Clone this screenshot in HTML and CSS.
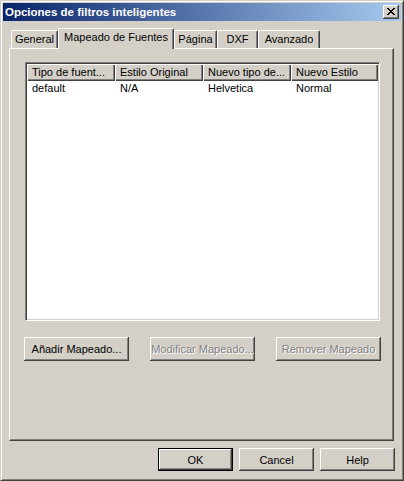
FILE: index.html
```html
<!DOCTYPE html>
<html lang="es">
<head>
<meta charset="utf-8">
<title>Opciones de filtros inteligentes</title>
<link rel="stylesheet" href="styles.css">
</head>
<body>
<div class="window">
  <div class="titlebar">
    <span class="title">Opciones de filtros inteligentes</span>
    <button class="close" aria-label="Cerrar">
      <svg width="8" height="7" viewBox="0 0 8 7" shape-rendering="crispEdges"><path d="M0 0h2v1H0zM6 0h2v1H6zM1 1h2v1H1zM5 1h2v1H5zM2 2h4v1H2zM3 3h2v1H3zM2 4h4v1H2zM1 5h2v1H1zM5 5h2v1H5zM0 6h2v1H0zM6 6h2v1H6z" fill="#000"/></svg>
    </button>
  </div>
  <div class="body">
    <div class="tabstrip">
      <div class="tab t-general">General</div>
      <div class="tab active t-mapeado">Mapeado de Fuentes</div>
      <div class="tab t-pagina">Página</div>
      <div class="tab t-dxf">DXF</div>
      <div class="tab t-avanzado">Avanzado</div>
    </div>
    <div class="panel">
      <div class="list">
        <div class="row header">
          <div class="cell c1">Tipo de fuent...</div>
          <div class="cell c2">Estilo Original</div>
          <div class="cell c3">Nuevo tipo de...</div>
          <div class="cell c4">Nuevo Estilo</div>
        </div>
        <div class="row data">
          <div class="cell c1">default</div>
          <div class="cell c2">N/A</div>
          <div class="cell c3">Helvetica</div>
          <div class="cell c4">Normal</div>
        </div>
      </div>
      <div class="actions">
        <button class="btn wide">Añadir Mapeado...</button>
        <button class="btn wide disabled">Modificar Mapeado...</button>
        <button class="btn wide disabled">Remover Mapeado</button>
      </div>
    </div>
  </div>
  <div class="footer">
    <button class="btn std default">OK</button>
    <button class="btn std">Cancel</button>
    <button class="btn std">Help</button>
  </div>
</div>
</body>
</html>
```
FILE: styles.css
```css
html, body {
  margin: 0;
  padding: 0;
  background: #d4d0c8;
}
body {
  font-family: "Liberation Sans", Arial, sans-serif;
  font-size: 11px;
  color: #000;
}
.window {
  width: 404px;
  height: 481px;
  box-sizing: border-box;
  background: #d4d0c8;
  border: 1px solid;
  border-color: #d4d0c8 #404040 #404040 #d4d0c8;
  box-shadow: inset 1px 1px #fff, inset -1px -1px #808080;
  padding: 2px;
  display: flex;
  flex-direction: column;
}
.titlebar {
  height: 18px;
  flex: none;
  display: flex;
  align-items: center;
  justify-content: space-between;
  background: linear-gradient(to right, #0a246a, #a6caf0);
  padding: 0 2px 0 2px;
}
.title {
  color: #fff;
  font-weight: bold;
  font-size: 11.5px;
  line-height: 18px;
  white-space: nowrap;
}
.close {
  width: 16px;
  height: 14px;
  padding: 0;
  margin: 0;
  border: 0;
  background: #d4d0c8;
  box-shadow: inset -1px -1px #404040, inset 1px 1px #fff, inset -2px -2px #808080;
  display: flex;
  align-items: center;
  justify-content: center;
}
.close svg {
  display: block;
  margin-top: -1px;
}
.body {
  padding: 7px 7px 0 6px;
  flex: none;
}
.tabstrip {
  height: 20px;
  display: flex;
  align-items: flex-end;
  padding-left: 2px;
}
.tab {
  box-sizing: border-box;
  height: 18px;
  border-top: 1px solid #fff;
  border-left: 1px solid #fff;
  border-right: 1px solid #404040;
  border-radius: 2px 2px 0 0;
  box-shadow: inset -1px 0 #808080;
  text-align: center;
  line-height: 16px;
  white-space: nowrap;
  background: #d4d0c8;
}
.tab.active {
  height: 21px;
  margin-bottom: -1px;
  line-height: 17px;
  position: relative;
  z-index: 1;
}
.t-general { width: 47px; }
.t-mapeado { width: 116px; }
.t-pagina { width: 43px; }
.t-dxf { width: 41px; }
.t-avanzado { width: 62px; }
.panel {
  box-sizing: border-box;
  height: 393px;
  border: 1px solid;
  border-color: #fff #404040 #404040 #fff;
  box-shadow: inset -1px -1px #808080;
  padding: 13px 0 0 14px;
}
.list {
  box-sizing: border-box;
  width: 355px;
  height: 259px;
  margin-left: 1px;
  background: #fff;
  border: 1px solid;
  border-color: #808080 #fff #fff #808080;
  box-shadow: inset 1px 1px #404040, inset -1px -1px #d4d0c8;
  padding: 1px;
}
.row {
  display: flex;
}
.cell {
  box-sizing: border-box;
  padding-left: 5px;
  white-space: nowrap;
  overflow: hidden;
}
.c1, .c2, .c3 { width: 88px; }
.c4 { width: 87px; }
.header .cell {
  height: 17px;
  line-height: 16px;
  background: #d4d0c8;
  box-shadow: inset 1px 1px #fff, inset -1px -1px #404040, inset -2px -2px #808080;
}
.data .cell {
  height: 16px;
  line-height: 15px;
}
.actions {
  display: flex;
  gap: 21px;
  margin-top: 16px;
}
.btn {
  box-sizing: border-box;
  margin: 0;
  padding: 0;
  border: 0;
  font-family: "Liberation Sans", Arial, sans-serif;
  font-size: 11px;
  color: #000;
  background: #d4d0c8;
  box-shadow: inset -1px -1px #404040, inset 1px 1px #fff, inset -2px -2px #808080;
  white-space: nowrap;
}
.btn.wide {
  width: 105px;
  height: 24px;
}
.btn.disabled {
  color: #808080;
  text-shadow: 1px 1px #fff;
}
.footer {
  display: flex;
  justify-content: flex-end;
  gap: 6px;
  padding-right: 6px;
  margin-top: 7px;
}
.btn.std {
  width: 75px;
  height: 23px;
}
.btn.default {
  border: 1px solid #000;
}
```
